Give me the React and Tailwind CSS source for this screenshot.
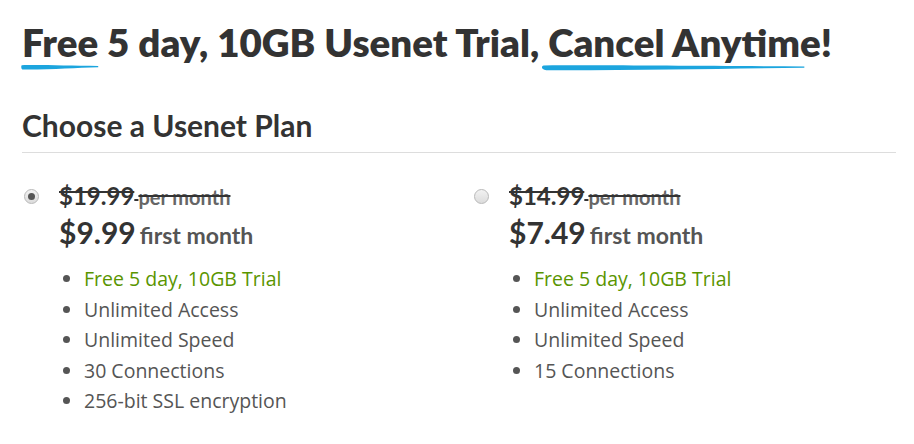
import React from 'react';

const Brush = ({ className }) => (
  <svg className={className} viewBox="0 0 100 8" preserveAspectRatio="none" aria-hidden="true">
    <path d="M1 2.2 C20 1.6 60 2.6 99 3 L99 4.2 C70 4.8 40 6.6 2 6.4 C0 6 0 2.6 1 2.2 Z" fill="#1ca5de" />
  </svg>
);

const plans = [
  {
    id: 'p1',
    old: '$19.99',
    price: '$9.99',
    checked: true,
    features: ['Unlimited Access', 'Unlimited Speed', '30 Connections', '256-bit SSL encryption'],
  },
  {
    id: 'p2',
    old: '$14.99',
    price: '$7.49',
    checked: false,
    features: ['Unlimited Access', 'Unlimited Speed', '15 Connections'],
  },
];

const Radio = ({ checked }) => (
  <span className="mt-[8px] flex h-[15px] w-[15px] shrink-0 items-center justify-center rounded-full border border-[#b9b9b9] bg-gradient-to-b from-[#f2f2f2] to-[#dcdcdc]">
    {checked && <span className="h-[7px] w-[7px] rounded-full bg-[#555]" />}
  </span>
);

const Plan = ({ plan }) => (
  <div className="flex w-[450px] gap-[20px] pl-[2px]">
    <Radio checked={plan.checked} />
    <div>
      <div className="text-[#333] line-through decoration-[#333] decoration-2 leading-[30px]">
        <span className="text-[24px] font-bold">{plan.old}</span>{' '}
        <span className="text-[20px] font-bold text-[#666]">per month</span>
      </div>
      <div className="leading-[36px]">
        <span className="text-[30px] font-bold text-[#333]">{plan.price}</span>{' '}
        <span className="text-[23px] font-bold text-[#555]">first month</span>
      </div>
      <ul className="mt-[8px] ml-[7px] list-disc pl-[18px] font-['Open_Sans',sans-serif] text-[19.5px] leading-[30.5px] text-[#555] marker:text-[#555]">
        <li className="text-[#5a9500]">Free 5 day, 10GB Trial</li>
        {plan.features.map((f) => (
          <li key={f}>{f}</li>
        ))}
      </ul>
    </div>
  </div>
);

const App = () => (
  <div className="min-h-screen bg-white font-['Lato',sans-serif]">
    <div className="pl-[22px] pt-[16px] w-[896px]">
      <h1 className="text-[38.5px] font-extrabold leading-[52px] text-[#333] whitespace-nowrap">
        <span className="relative inline-block">
          Free
          <Brush className="absolute left-[-1px] top-[47px] h-[8px] w-[78px]" />
        </span>{' '}
        5 day, 10GB Usenet Trial,{' '}
        <span className="relative inline-block">
          Cancel Anytime
          <Brush className="absolute left-[-7px] top-[47px] h-[9px] w-[266px]" />
        </span>
        !
      </h1>
      <h2 className="mt-[40px] border-b border-[#dddddd] pb-[10px] text-[30px] font-bold leading-[34px] text-[#333]">
        Choose a Usenet Plan
      </h2>
      <div className="mt-[28px] flex">
        <div className="w-[450px]">
          <Plan plan={plans[0]} />
        </div>
        <Plan plan={plans[1]} />
      </div>
    </div>
  </div>
);

export default App;
